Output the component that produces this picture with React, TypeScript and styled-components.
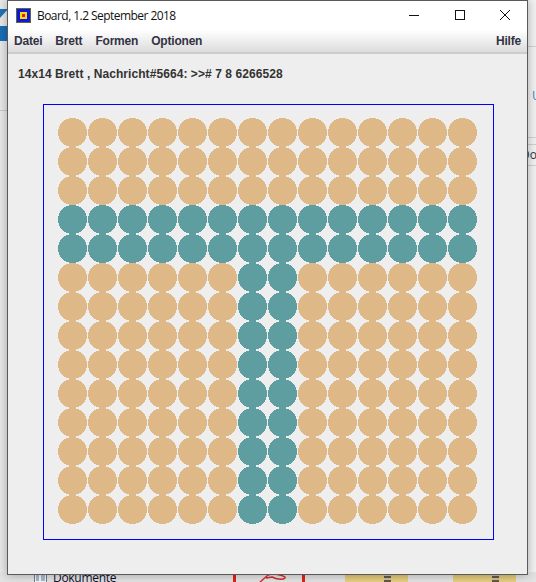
import React from 'react';
import styled, { createGlobalStyle } from 'styled-components';

const GlobalStyle = createGlobalStyle`
  html, body {
    margin: 0;
    padding: 0;
    background: #f0f0f0;
    overflow: hidden;
  }
`;

const ROWS = 14;
const COLS = 14;
const DISC = 29;
const isTeal = (r: number, c: number) => r === 3 || r === 4 || (r >= 3 && (c === 6 || c === 7));

// the board paints its ovals without antialiasing, so build the disc line by line
let discPath = '';
for (let y = 0; y < DISC; y++) {
  const dy = y + 0.5 - DISC / 2;
  const half = Math.sqrt((DISC * DISC) / 4 - dy * dy);
  const x0 = Math.round(DISC / 2 - half);
  const w = DISC - 2 * x0;
  discPath += `M${x0} ${y}h${w}v1h${-w}z`;
}

function App() {
  const cells = [];
  for (let r = 0; r < ROWS; r++) {
    for (let c = 0; c < COLS; c++) {
      cells.push(
        <Disc key={r + '-' + c} viewBox="0 0 29 29" shapeRendering="crispEdges">
          <path d={discPath} fill={isTeal(r, c) ? '#5f9ea0' : '#deb887'} />
        </Disc>
      );
    }
  }
  return (
    <Desktop>
      <GlobalStyle />
      <BackLeft>
        <BackChevron />
        <BackBlue />
        <BackLine />
      </BackLeft>
      <BackRight>
        <span />
        <RightLine />
        <span />
        <RightText $color="#4a7fb5">U</RightText>
        <span />
        <RightLine />
        <span />
        <RightLine />
        <RightDoc>Do</RightDoc>
        <RightLine />
      </BackRight>
      <BottomStrip>
        <DocIcon width="13" height="9" viewBox="0 0 13 9">
          <rect x="0.5" y="0.5" width="12" height="10" fill="#f4f4f4" stroke="#6d7d8c" />
          <path d="M2 3h3M7 3h4M2 5h3M7 5h4M2 7h3M7 7h4" stroke="#5a7ea8" />
        </DocIcon>
        <DocLabel>Dokumente</DocLabel>
        <RedBar />
        <Scribble width="30" height="8" viewBox="0 0 30 8">
          <path d="M1 9 L10 1 C16 -1 24 1 27 3 C28 6 20 6 14 3 L8 4" fill="none" stroke="#d8282a" strokeWidth="1.4" />
        </Scribble>
        <RedBar />
        <FolderTab><Zip /></FolderTab>
        <FolderTab><Zip /></FolderTab>
      </BottomStrip>

      <Window>
        <TitleBar>
          <AppIcon width="15" height="15" viewBox="0 0 15 15" shapeRendering="crispEdges">
            <rect width="15" height="15" fill="#5c6b2e" />
            <rect x="1" y="1" width="13" height="13" fill="#1414e0" />
            <rect x="4" y="4" width="7" height="7" fill="#f4e000" />
            <rect x="6" y="6" width="3" height="3" fill="#d8203c" />
          </AppIcon>
          <TitleText>Board, 1.2 September 2018</TitleText>
          <Controls>
            <ControlIcon viewBox="0 0 12 12" shapeRendering="crispEdges">
              <path d="M1 6.5h10" stroke="#111" fill="none" />
            </ControlIcon>
            <ControlIcon viewBox="0 0 12 12" shapeRendering="crispEdges">
              <rect x="1.5" y="1.5" width="9" height="9" stroke="#111" fill="none" />
            </ControlIcon>
            <ControlIcon viewBox="0 0 12 12">
              <path d="M1 1l10 10M11 1L1 11" stroke="#111" fill="none" />
            </ControlIcon>
          </Controls>
        </TitleBar>
        <MenuBar>
          <MenuItem>Datei</MenuItem>
          <MenuItem>Brett</MenuItem>
          <MenuItem>Formen</MenuItem>
          <MenuItem>Optionen</MenuItem>
          <HelpItem>Hilfe</HelpItem>
        </MenuBar>
        <Content>
          <StatusLabel>14x14 Brett , Nachricht#5664: &gt;&gt;# 7 8 6266528</StatusLabel>
          <BoardFrame>
            <BoardGrid>{cells}</BoardGrid>
          </BoardFrame>
        </Content>
      </Window>
    </Desktop>
  );
}

export default App;

const Desktop = styled.div`
  position: relative;
  width: 536px;
  height: 582px;
  overflow: hidden;
  background: #f0f0f0;
`;

const BackLeft = styled.div`
  position: absolute;
  inset: 0 auto 0 0;
  width: 8px;
  padding-top: 9px;
  display: flex;
  flex-direction: column;
  background: #e8e8e8;
`;

const BackChevron = styled.div`
  width: 0;
  height: 0;
  border-top: 9px solid #1c73b8;
  border-right: 8px solid transparent;
`;

const BackBlue = styled.div`
  height: 15px;
  margin-top: 8px;
  background: #1a6fb5;
`;

const BackLine = styled.div`
  height: 1px;
  margin-top: 69px;
  background: #c8c8c8;
`;

const BackRight = styled.div`
  position: absolute;
  inset: 0 0 0 auto;
  width: 8px;
  display: grid;
  grid-template-rows: 46px 1px 42px 14px 34px 1px 6px 1px 20px 1px;
  background: #f1f1f1;
`;

const RightLine = styled.div`
  background: #d0d0d0;
`;

const RightText = styled.span<{ $color: string }>`
  padding-left: 4px;
  font: 12px/14px 'Open Sans', sans-serif;
  color: ${(p) => p.$color};
  white-space: nowrap;
`;

const RightDoc = styled.span`
  margin-left: -7px;
  font: 12px/20px 'Open Sans', sans-serif;
  color: #333333;
  white-space: nowrap;
`;

const BottomStrip = styled.div`
  position: absolute;
  inset: auto 0 0 0;
  height: 10px;
  padding-left: 34px;
  display: flex;
  align-items: flex-start;
  background: #e2e2e2;
`;

const DocIcon = styled.svg`
  flex: none;
  margin-top: 1px;
`;

const DocLabel = styled.span`
  width: 180px;
  margin: -2px 0 0 6px;
  font: 12px/15px 'Open Sans', sans-serif;
  letter-spacing: -0.3px;
  color: #101030;
  flex: none;
`;

const RedBar = styled.div`
  flex: none;
  width: 3px;
  height: 10px;
  background: #e02018;
`;

const Scribble = styled.svg`
  flex: none;
  margin: 2px 14px 0 22px;
`;

const FolderTab = styled.div`
  flex: none;
  width: 63px;
  height: 10px;
  margin-left: 40px;
  padding-left: 39px;
  box-sizing: border-box;
  background: linear-gradient(#d8c078, #e8d080);
  & + & {
    margin-left: 45px;
  }
`;

const Zip = styled.div`
  width: 7px;
  height: 10px;
  background: repeating-linear-gradient(#6a5a38 0 2px, #c0c0b8 2px 4px);
`;

const Window = styled.div`
  position: absolute;
  left: 7px;
  top: 0;
  width: 519px;
  height: 573px;
  display: flex;
  flex-direction: column;
  background: #eeeeee;
  border: 1px solid #5a5a5a;
  box-shadow: 0 0 9px rgba(0, 0, 0, 0.3);
`;

const TitleBar = styled.div`
  display: flex;
  align-items: center;
  height: 29px;
  padding-left: 8px;
  background: #ffffff;
`;

const AppIcon = styled.svg`
  width: 15px;
  height: 15px;
  margin: 0 6px 1px 0;
  flex: none;
`;

const TitleText = styled.span`
  font: 12px/16px 'Open Sans', 'Noto Sans', sans-serif;
  color: #111111;
  letter-spacing: -0.55px;
`;

const Controls = styled.div`
  display: flex;
  margin: 0 16px 2px auto;
  gap: 33.5px;
`;

const ControlIcon = styled.svg`
  width: 12px;
  height: 12px;
`;

const MenuBar = styled.div`
  display: flex;
  align-items: center;
  gap: 13px;
  height: 22px;
  padding: 0 6px;
  background: linear-gradient(#ffffff, #dcdcdc);
  border-bottom: 2px solid #cccccc;
`;

const MenuItem = styled.span`
  font: bold 12px/14px 'Liberation Sans', Arial, sans-serif;
  letter-spacing: -0.2px;
  color: #333344;
`;

const HelpItem = styled(MenuItem)`
  margin-left: auto;
`;

const Content = styled.div`
  flex: 1;
  display: flex;
  flex-direction: column;
  padding: 13px 0 0 10px;
`;

const StatusLabel = styled.div`
  font: bold 12px/14px 'Liberation Sans', Arial, sans-serif;
  letter-spacing: 0.07px;
  color: #333333;
`;

const BoardFrame = styled.div`
  box-sizing: border-box;
  width: 451px;
  height: 436px;
  margin: 23px 0 0 25px;
  padding: 13px 0 0 14px;
  border: 1px solid #0000ff;
`;

const BoardGrid = styled.div`
  display: grid;
  grid-template-columns: repeat(14, 30px);
  grid-auto-rows: 29px;
`;

const Disc = styled.svg`
  display: block;
  width: 29px;
  height: 29px;
`;
